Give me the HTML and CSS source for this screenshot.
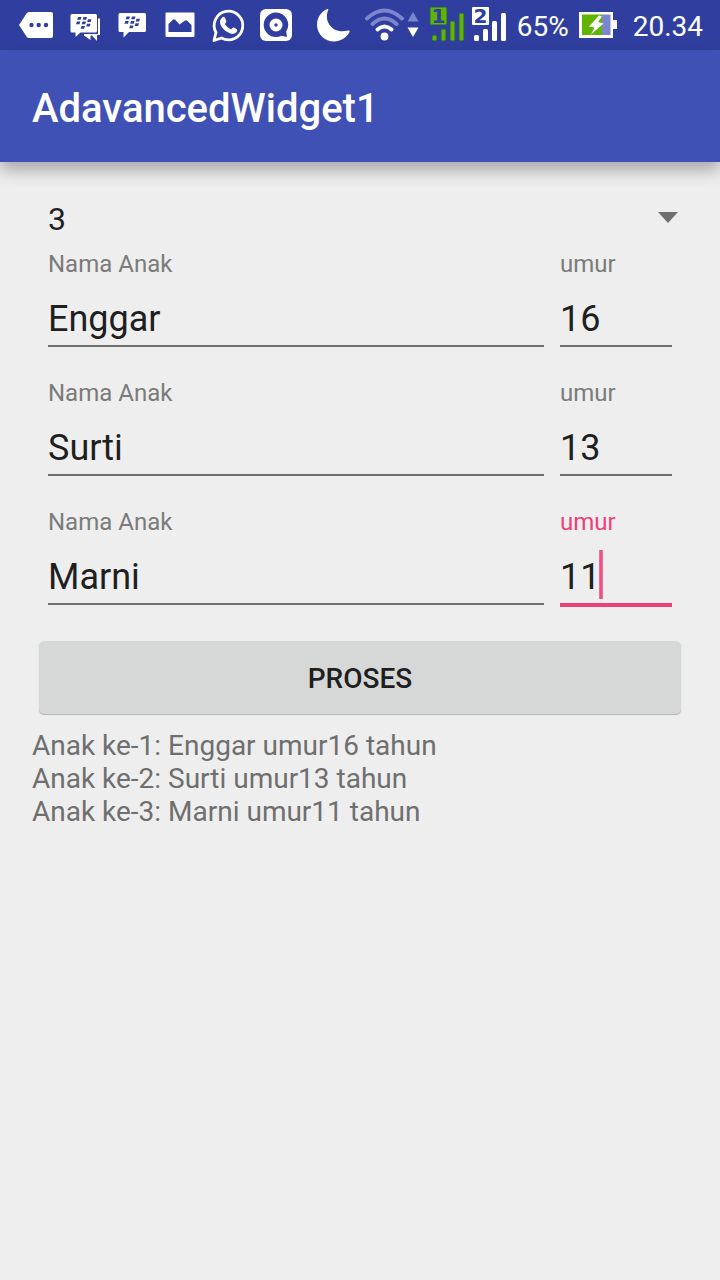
FILE: index.html
```html
<!DOCTYPE html>
<html lang="id">
<head>
<meta charset="utf-8">
<meta name="viewport" content="width=device-width, initial-scale=1">
<title>AdavancedWidget1</title>
<link rel="stylesheet" href="styles.css">
</head>
<body>
<svg class="defs" aria-hidden="true">
  <defs>
    <g id="bb-dots">
      <path d="M2 0h3.500l-.8 2.800H1.200zM7.500 0H11l-.8 2.800H6.700zM.8 4.500h3.500l-.8 2.800H0zM6.500 4.500H10l-.8 2.800H5.700zM12 2.300h3.500l-.8 2.800h-3.500zM11 6.800h3.500l-.8 2.800h-3.500zM5.500 9H9l-.8 2.800H4.700z"/>
    </g>
  </defs>
</svg>
<div class="status-bar">
  <div class="status-group">
    <svg class="icon" viewBox="12 0 48 50" aria-hidden="true">
      <path fill="#fff" d="M19 25 26.500 13.500Q27.500 12 29 12H51Q53 12 53 14V36Q53 38 51 38H29Q27.500 38 26.500 36.500Z"/>
      <g fill="#303f9f"><circle cx="31.500" cy="25" r="2.200"/><circle cx="38.700" cy="25" r="2.200"/><circle cx="46" cy="25" r="2.200"/></g>
    </svg>
    <svg class="icon" viewBox="60 0 48 50" aria-hidden="true">
      <path fill="#fff" d="M98 18.500h2V35h-3v6l-5-5.500h-1.500V40L84 35.500v-1.500H98z"/>
      <path fill="#fff" d="M72 14H95.500Q97 14 97 15.500V31Q97 32.500 95.500 32.500H80.500L75.500 37V32.500H72Q70.500 32.500 70.500 31V15.500Q70.500 14 72 14Z"/>
      <use href="#bb-dots" x="76" y="17" fill="#303f9f"/>
    </svg>
    <svg class="icon" viewBox="108 0 48 50" aria-hidden="true">
      <path fill="#fff" d="M120 13H144.500Q146 13 146 14.500V30.500Q146 32 144.500 32H129L123.500 37.500V32H120Q118.500 32 118.500 30.500V14.500Q118.500 13 120 13Z"/>
      <use href="#bb-dots" x="124.500" y="16.500" fill="#303f9f"/>
    </svg>
    <svg class="icon" viewBox="156 0 48 50" aria-hidden="true">
      <rect x="165.500" y="12.500" width="29" height="24.500" rx="1" fill="#fff"/>
      <path fill="#303f9f" d="M168.500 32V24L173 19.500H175L179.500 24.500 185 20.500H187L191.500 25V32Z"/>
    </svg>
    <svg class="icon" viewBox="204 0 48 50" aria-hidden="true">
      <path fill="none" stroke="#fff" stroke-width="2.800" stroke-linejoin="round" d="M214 40.500 216 32.500A14.300 14.300 0 1 1 221.500 38Z"/>
      <path fill="#fff" d="M222.500 17.200q1.600-1 2.500.7l1.400 3q.3 1-1.500 3 2.200 4 6.200 5.500 1.600-2.200 2.600-1.800l3.300 1.700q.8 3.500-3.500 4.500-2.800.7-8.300-3-6-5.500-5.200-9.800.4-2.300 2.500-3.800"/>
    </svg>
    <svg class="icon" viewBox="252 0 48 50" aria-hidden="true">
      <rect x="260" y="9" width="32" height="32" rx="6" fill="#fff"/>
      <path fill="#303f9f" d="M276 12.500a12.300 12.300 0 1 0 5.500 23.300L287 37l-.8-5.500A12.300 12.300 0 0 0 276 12.500"/>
      <circle cx="276" cy="25" r="6.500" fill="#fff"/>
      <circle cx="276" cy="25" r="1.700" fill="#303f9f"/>
    </svg>
  </div>
  <div class="status-group">
    <svg class="icon icon-moon" viewBox="312 0 50 50" aria-hidden="true">
      <path fill="#fff" d="M327.500 9Q329 8.500 328 10.500C323.500 22 333 34.500 348 30.500Q350.500 30 349.500 32C346 38 340.500 41.500 334 41.500 325 41.500 317 34 317 25 317 17.500 321 11.500 327.500 9Z"/>
    </svg>
    <svg class="icon icon-wifi" viewBox="362 0 64 50" aria-hidden="true">
      <g fill="none" stroke-width="4" stroke-linecap="round">
        <path stroke="#7c86cf" d="M367 18.500Q384.500 2.500 402 18.500M372.500 24Q384.500 13 396.500 24"/>
        <path stroke="#fff" d="M377.500 29.500Q384.500 23.500 391.500 29.500"/>
      </g>
      <circle cx="384.500" cy="36.500" r="3.900" fill="#fff"/>
      <path fill="#7c86cf" d="M407.500 21.500 413 12l5.500 9.500Z"/>
      <path fill="#fff" d="M407.500 27.500h11L413 37Z"/>
    </svg>
    <svg class="icon icon-sim" viewBox="426 0 42 50" aria-hidden="true">
      <g fill="#5fb404" stroke="#28565e" stroke-width="1">
        <rect x="430" y="7" width="17" height="18" rx="1"/>
        <rect x="432" y="35" width="5" height="6" rx="1.500"/>
        <rect x="441" y="29" width="5" height="12" rx="1.500"/>
        <rect x="450" y="21" width="5" height="20" rx="1.500"/>
        <rect x="459" y="13" width="5" height="28" rx="1.500"/>
      </g>
      <text class="sim-number" x="438.500" y="22.500" text-anchor="middle">1</text>
    </svg>
    <svg class="icon icon-sim" viewBox="468 0 42 50" aria-hidden="true">
      <g fill="#fff">
        <rect x="472" y="7" width="17" height="18" rx="1"/>
        <rect x="474" y="35" width="5" height="6" rx="1.500"/>
        <rect x="483" y="29" width="5" height="12" rx="1.500"/>
        <rect x="492" y="21" width="5" height="20" rx="1.500"/>
        <rect x="501" y="13" width="5" height="28" rx="1.500"/>
      </g>
      <text class="sim-number" x="480.500" y="22.500" text-anchor="middle">2</text>
    </svg>
    <span class="battery-level">65%</span>
    <svg class="icon icon-battery" viewBox="577 0 42 50" aria-hidden="true">
      <path fill="#fff" d="M579 12h34v8h4v9h-4v9h-34z"/>
      <path fill="#5fb404" d="M582 14.500h20v20.500h-20z"/>
      <path fill="#7c86cf" d="M602 14.500h8.500v20.500H602z"/>
      <path fill="#fff" d="M599 15.500 589 26.500l5.500 1-3.500 7 12.500-11-5.500-1.500 4-5.500z"/>
    </svg>
    <span class="clock">20.34</span>
  </div>
</div>
<header class="app-bar">
  <h1 class="app-title">AdavancedWidget1</h1>
</header>
<main class="content">
  <div class="spinner">
    <select class="spinner-select" aria-label="Jumlah anak">
      <option>1</option>
      <option>2</option>
      <option selected>3</option>
    </select>
  </div>
  <form class="form">
    <div class="child-row">
      <div class="field">
        <label class="field-label" for="nama1">Nama Anak</label>
        <input class="field-input" id="nama1" type="text" value="Enggar">
      </div>
      <div class="field field-age">
        <label class="field-label" for="umur1">umur</label>
        <input class="field-input" id="umur1" type="text" inputmode="numeric" value="16">
      </div>
    </div>
    <div class="child-row">
      <div class="field">
        <label class="field-label" for="nama2">Nama Anak</label>
        <input class="field-input" id="nama2" type="text" value="Surti">
      </div>
      <div class="field field-age">
        <label class="field-label" for="umur2">umur</label>
        <input class="field-input" id="umur2" type="text" inputmode="numeric" value="13">
      </div>
    </div>
    <div class="child-row">
      <div class="field">
        <label class="field-label" for="nama3">Nama Anak</label>
        <input class="field-input" id="nama3" type="text" value="Marni">
      </div>
      <div class="field field-age field-active">
        <label class="field-label" for="umur3">umur</label>
        <input class="field-input" id="umur3" type="text" inputmode="numeric" value="11">
        <span class="caret"></span>
      </div>
    </div>
  </form>
  <button class="process-button" type="button">PROSES</button>
  <p class="result">Anak ke-1: Enggar umur16 tahun<br>Anak ke-2: Surti umur13 tahun<br>Anak ke-3: Marni umur11 tahun</p>
</main>
</body>
</html>
```

FILE: styles.css
```css
* {
  box-sizing: border-box;
}

body {
  margin: 0;
  min-height: 100vh;
  background: #eeeeee;
  color: #1f1f1f;
  font-family: Roboto, "Noto Sans", sans-serif;
}

.defs {
  display: block;
  width: 0;
  height: 0;
}

.status-bar {
  display: flex;
  justify-content: space-between;
  height: 50px;
  padding: 0 17px 0 12px;
  background: #303f9f;
  color: #ffffff;
}

.status-group {
  display: flex;
  align-items: center;
}

.icon {
  display: block;
  flex: none;
  width: 48px;
  height: 50px;
}

.icon-moon {
  width: 50px;
}

.icon-wifi {
  width: 64px;
}

.icon-sim,
.icon-battery {
  width: 42px;
}

.sim-number {
  fill: #303f9f;
  font-family: "DejaVu Sans", sans-serif;
  font-size: 20px;
  font-weight: 700;
}

.battery-level,
.clock {
  padding-top: 4px;
  font-size: 28px;
  line-height: 48px;
}

.battery-level {
  margin: 0 8px 0 7px;
}

.clock {
  margin-left: 14px;
}

.app-bar {
  display: flex;
  align-items: center;
  height: 112px;
  padding: 6px 32px 0;
  background: #3f51b5;
  box-shadow: 0 8px 16px rgba(0, 0, 0, 0.3);
}

.app-title {
  margin: 0;
  color: #ffffff;
  font-size: 40px;
  font-weight: 500;
  line-height: 48px;
}

.content {
  padding: 32px 32px 0;
}

.spinner {
  position: relative;
  margin-bottom: 6px;
}

.spinner::after {
  content: "";
  position: absolute;
  top: 18px;
  right: 10px;
  width: 20px;
  height: 11px;
  background: #6f6f6f;
  clip-path: polygon(0 0, 100% 0, 50% 100%);
  pointer-events: none;
}

.spinner-select {
  display: block;
  width: 100%;
  height: 50px;
  padding: 0 48px 0 16px;
  border: 0;
  appearance: none;
  background: transparent;
  color: inherit;
  font: 32px Roboto, "Noto Sans", sans-serif;
}

.form {
  display: flex;
  flex-direction: column;
  gap: 32px;
  padding: 0 16px;
}

.child-row {
  display: flex;
  gap: 16px;
}

.field {
  position: relative;
  flex: 1;
  min-width: 0;
}

.field-age {
  flex: 0 0 112px;
}

.field-label {
  display: block;
  color: #7b7b7b;
  font-size: 24px;
  line-height: 28px;
}

.field-input {
  display: block;
  width: 100%;
  height: 69px;
  padding: 20px 0 5px;
  border: 0;
  border-bottom: 2px solid #6f6f6f;
  border-radius: 0;
  outline: 0;
  background: transparent;
  color: inherit;
  font: 36px/42px Roboto, "Noto Sans", sans-serif;
}

.field-active .field-label {
  color: #ec407a;
}

.field-active .field-input {
  border-bottom-color: #ec407a;
  box-shadow: 0 2px 0 #ec407a;
}

.caret {
  position: absolute;
  top: 42px;
  left: 39px;
  width: 4px;
  height: 49px;
  background: linear-gradient(90deg, #f27fa6, #ec407a 50%, #f27fa6);
}

.process-button {
  display: block;
  width: calc(100% - 14px);
  height: 73px;
  margin: 36px 7px 0;
  padding: 2px 0 0;
  border: 0;
  border-radius: 5px;
  background: #d6d8d7;
  box-shadow: 0 1px 1px rgba(0, 0, 0, 0.25);
  color: #1f1f1f;
  font: 500 28px Roboto, "Noto Sans", sans-serif;
}

.result {
  margin: 15px 0 0;
  color: #6f6f6f;
  font-size: 28px;
  line-height: 33px;
}
```
